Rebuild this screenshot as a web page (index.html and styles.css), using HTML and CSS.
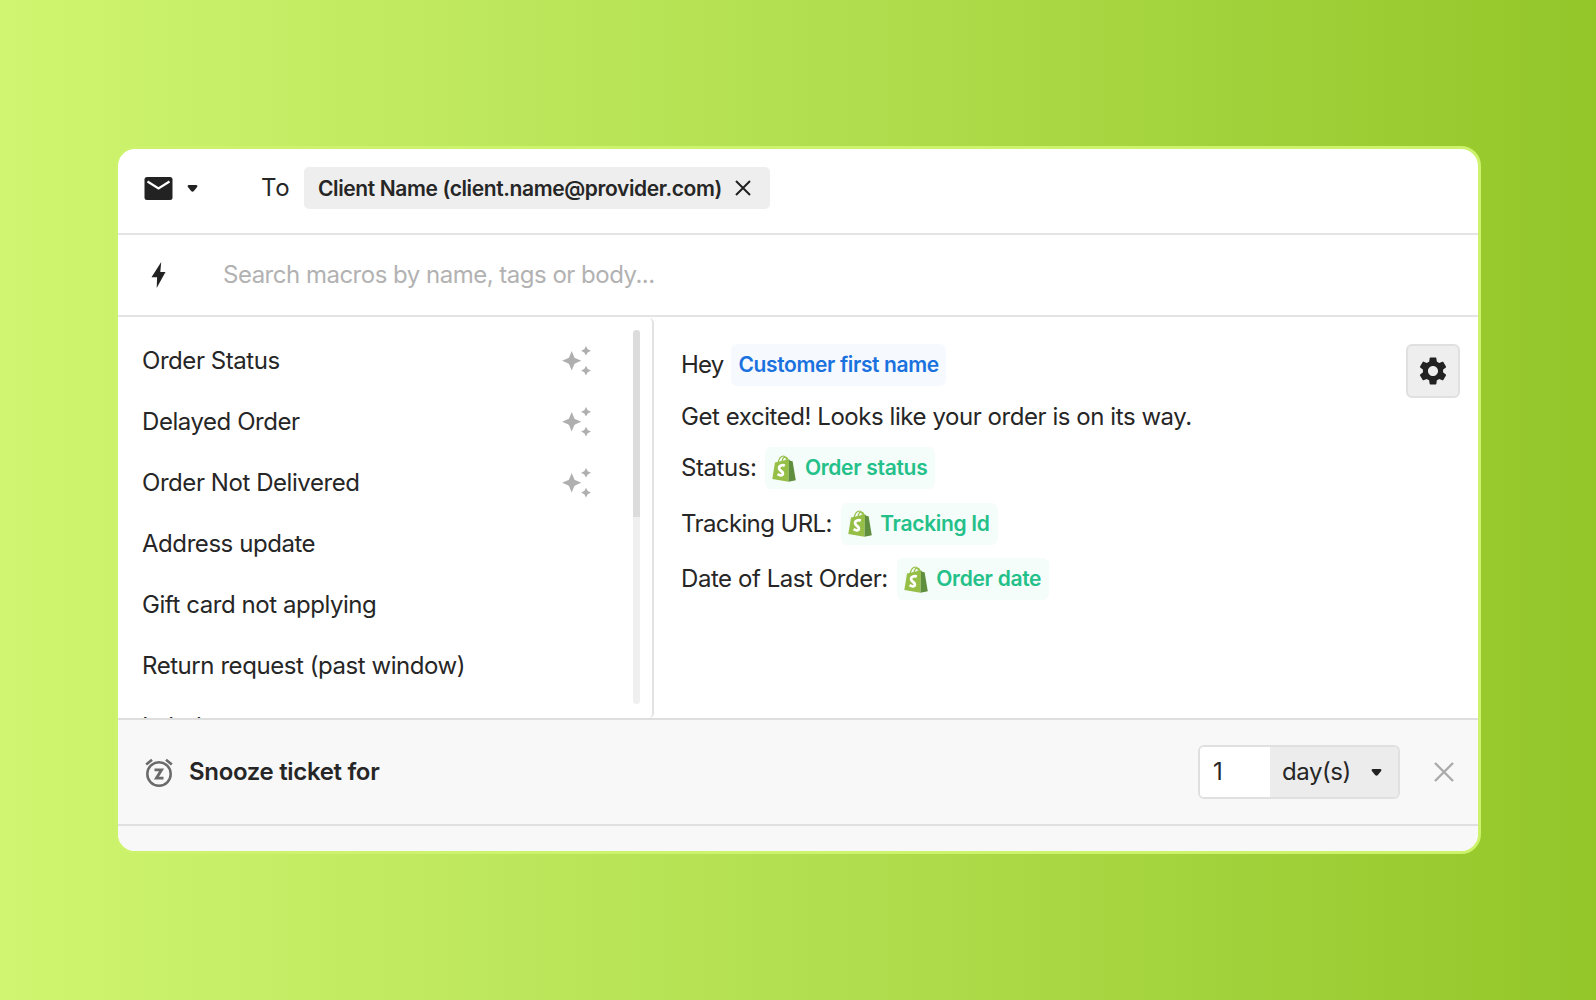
FILE: index.html
```html
<!DOCTYPE html>
<html lang="en">

<head>
    <meta charset="UTF-8">
    <meta name="viewport" content="width=device-width, initial-scale=1.0">
    <title>Macros</title>
    <link rel="stylesheet" href="styles.css">
</head>

<body>
    <!-- shared icons -->
    <svg class="defs" width="0" height="0">
        <symbol id="sparkles" viewBox="0 0 30 30">
            <path d="M9.7 5 L12.3 11.200 Q12.700 12 13.500 12.300 L19.300 14.700 L13.500 17.200 Q12.700 17.500 12.300 18.300 L9.700 24.500 L7.100 18.300 Q6.700 17.500 5.900 17.200 L0.100 14.700 L5.900 12.300 Q6.700 12 7.100 11.200Z" />
            <path d="M24 0 L25.700 3.300 L29 4.800 L25.700 6.400 L24 9.600 L22.300 6.400 L19.100 4.800 L22.300 3.300Z" />
            <path d="M24 19.800 L25.700 23.100 L29 24.600 L25.700 26.200 L24 29.400 L22.300 26.200 L19.100 24.600 L22.300 23.100Z" />
        </symbol>
        <symbol id="caret" viewBox="0 0 10 7">
            <path d="M1 0 H9 Q10.4 0.6 9.6 2 L6.4 6 Q5 7.4 3.6 6 L0.4 2 Q-0.4 0.6 1 0Z" />
        </symbol>
        <symbol id="bag" viewBox="0 0 24 27">
            <path d="M6 8 C7 3 9.500 1 11.500 1 C14 1 14.500 4 14.500 7 M10 7 C10.500 3.500 12 2 13.500 2.200 C15.500 2.500 16 4 16 6.500" fill="none" stroke="#95bf47" stroke-width="1.200" />
            <path d="M3 7.500 L17 4.300 L16.500 26.800 L0.300 24Z" fill="#95bf47" />
            <path d="M17 4.300 L18.200 5.800 L20.600 6.200 L23.800 25.200 L16.500 26.800Z" fill="#5e8e3e" />
            <path d="M12.800 10.700 C10.500 9.600 7 10.500 7.100 13.300 C7.200 16 11 16 10.900 18.500 C10.700 21.200 7.500 20.500 5.600 19.200" fill="none" stroke="#fff" stroke-width="2.800" />
        </symbol>
    </svg>

    <div class="card">
        <div class="recipient">
            <svg class="icon-mail" viewBox="0 0 28 23">
                <rect width="28" height="23" rx="2.500" fill="#222" />
                <path d="M3 4.500 L14 11.500 L25 4.500" fill="none" stroke="#fff" stroke-width="2.200" />
            </svg>
            <svg class="caret caret-mail"><use href="#caret" /></svg>
            <span class="to">To</span>
            <span class="chip">
                <span class="chip-text">Client Name (client.name@provider.com)</span>
                <svg class="chip-close" viewBox="0 0 16 16">
                    <path d="M1 1 L15 15 M15 1 L1 15" />
                </svg>
            </span>
        </div>

        <div class="search">
            <svg class="icon-bolt" viewBox="0 0 14 26">
                <path d="M9.700 0 L8.800 10 H14 L5.200 26 L5.600 15.200 H0Z" fill="#222" />
            </svg>
            <span class="placeholder">Search macros by name, tags or body...</span>
        </div>

        <div class="content">
            <div class="list">
                <div class="item"><span>Order Status</span><svg class="sparkles"><use href="#sparkles" /></svg></div>
                <div class="item"><span>Delayed Order</span><svg class="sparkles"><use href="#sparkles" /></svg></div>
                <div class="item"><span>Order Not Delivered</span><svg class="sparkles"><use href="#sparkles" /></svg></div>
                <div class="item"><span>Address update</span></div>
                <div class="item"><span>Gift card not applying</span></div>
                <div class="item"><span>Return request (past window)</span></div>
                <div class="item"><span>Label</span></div>
                <div class="scrollbar"><div class="thumb"></div></div>
            </div>

            <div class="preview">
                <div class="message">
                    <div class="line first"><span class="text">Hey</span><span class="tag blue"><b>Customer first name</b></span></div>
                    <div class="line plain"><span class="text">Get excited! Looks like your order is on its way.</span></div>
                    <div class="line"><span class="text">Status:</span><span class="tag green"><svg class="bag"><use href="#bag" /></svg><b>Order status</b></span></div>
                    <div class="line tracking"><span class="text">Tracking URL:</span><span class="tag green"><svg class="bag"><use href="#bag" /></svg><b>Tracking Id</b></span></div>
                    <div class="line"><span class="text">Date of Last Order:</span><span class="tag green"><svg class="bag"><use href="#bag" /></svg><b>Order date</b></span></div>
                </div>
                <button class="settings">
                    <svg class="icon-gear" viewBox="2.270 2 19.460 20">
                        <path fill="#222" d="M19.140 12.940c.04-.3.060-.61.060-.94 0-.32-.02-.64-.07-.94l2.030-1.580c.18-.14.230-.41.120-.61l-1.920-3.320c-.12-.22-.37-.29-.59-.22l-2.390.96c-.5-.38-1.030-.7-1.620-.94l-.36-2.540c-.04-.24-.24-.41-.48-.41h-3.840c-.24 0-.43.17-.47.41l-.36 2.540c-.59.24-1.130.57-1.620.94l-2.390-.96c-.22-.08-.47 0-.59.22L2.740 8.870c-.12.21-.08.47.12.61l2.030 1.580c-.05.3-.09.63-.09.94s.02.64.07.94l-2.030 1.580c-.18.14-.23.41-.12.61l1.920 3.320c.12.22.37.29.59.22l2.390-.96c.5.38 1.030.7 1.620.94l.36 2.540c.05.24.24.41.48.41h3.840c.24 0 .44-.17.47-.41l.36-2.540c.59-.24 1.130-.56 1.620-.94l2.390.96c.22.08.47 0 .59-.22l1.920-3.320c.12-.22.070-.47-.12-.61l-2.010-1.580zM12 15.600c-1.980 0-3.600-1.620-3.600-3.600s1.620-3.600 3.600-3.600 3.600 1.620 3.600 3.600-1.620 3.600-3.600 3.600z" />
                    </svg>
                </button>
            </div>
        </div>

        <div class="snooze">
            <svg class="icon-snooze" viewBox="0 0 28 29" fill="none" stroke="#6a6a6a">
                <circle cx="14" cy="16" r="11.700" stroke-width="2.500" />
                <path d="M1.200 6.500 L7 1.700 M26.800 6.500 L21 1.700" stroke-width="2.600" />
                <path d="M9.500 11.800 H16.600 L11.400 20.200 H18.500" stroke-width="2.800" />
            </svg>
            <span class="snooze-text">Snooze ticket for</span>
            <div class="duration">
                <span class="amount">1</span>
                <span class="unit"><span>day(s)</span><svg class="caret"><use href="#caret" /></svg></span>
            </div>
            <svg class="snooze-close" viewBox="0 0 20 20">
                <path d="M1 1 L19 19 M19 1 L1 19" />
            </svg>
        </div>
        <div class="bottom"></div>
    </div>
</body>

</html>
```

FILE: styles.css
```css
* {
    box-sizing: border-box;
}

body {
    margin: 0;
    width: 1596px;
    height: 1000px;
    overflow: hidden;
    display: flex;
    justify-content: center;
    align-items: center;
    background: linear-gradient(90deg, #d0f570 0%, #b2df50 50%, #98ca2e 93%, #92c629 100%);
    font-family: Inter, "Liberation Sans", sans-serif;
    font-size: 24px;
    letter-spacing: -0.44px;
    color: #262626;
}

svg {
    flex: none;
    display: block;
}

.defs {
    position: absolute;
}

.card {
    width: 1366px;
    height: 708px;
    border: 3px solid #cdf26c;
    border-radius: 20px;
    background: #fff;
    overflow: hidden;
    display: flex;
    flex-direction: column;
}

/* recipient row */
.recipient {
    height: 86px;
    flex: none;
    display: flex;
    align-items: center;
    padding: 0 0 6px 26px;
    border-bottom: 2px solid #e4e4e4;
}

.icon-mail {
    width: 29px;
    height: 23px;
}

.caret {
    width: 11px;
    height: 7px;
    fill: #222;
}

.caret-mail {
    margin-left: 14px;
}

.to {
    margin-left: 63px;
    width: 43px;
    padding-bottom: 1px;
    letter-spacing: 0.7px;
}

.chip {
    height: 42px;
    width: 466px;
    border-radius: 5px;
    background: #eee;
    display: flex;
    align-items: center;
    justify-content: space-between;
    padding: 0 19px 0 14px;
}

.chip-text {
    font-size: 21px;
    font-weight: 600;
    letter-spacing: -0.39px;
    white-space: nowrap;
}

.chip-close {
    width: 16px;
    height: 16px;
    stroke: #222;
    stroke-width: 2;
}

/* search row */
.search {
    height: 82px;
    flex: none;
    display: flex;
    align-items: center;
    padding-left: 33px;
    border-bottom: 2px solid #e4e4e4;
}

.icon-bolt {
    width: 15px;
    height: 26px;
}

.placeholder {
    margin-left: 57px;
    padding-bottom: 2px;
    letter-spacing: -0.5px;
    color: #b2b2b2;
}

/* macros list and preview */
.content {
    height: 401px;
    flex: none;
    display: flex;
}

.list {
    position: relative;
    width: 536px;
    height: 400px;
    margin-top: 1px;
    padding-top: 12px;
    border-right: 2px solid #e2e2e2;
    border-radius: 0 5px 5px 0;
    overflow: hidden;
}

.item {
    height: 61px;
    display: flex;
    align-items: center;
    justify-content: space-between;
    padding: 0 60px 0 24px;
}

.sparkles {
    width: 30px;
    height: 30px;
    fill: #afafaf;
}

.scrollbar {
    position: absolute;
    top: 12px;
    right: 12px;
    width: 7px;
    height: 374px;
    border-radius: 4px;
    background: #efefef;
}

.thumb {
    height: 187px;
    border-radius: 4px 4px 0 0;
    background: #dcdcdc;
}

.preview {
    flex: 1;
    display: flex;
    justify-content: space-between;
    align-items: flex-start;
    padding: 27px 18px 0 27px;
}

.line {
    height: 42px;
    margin-bottom: 13.5px;
    display: flex;
    align-items: center;
    gap: 9px;
    white-space: nowrap;
}

.line.first {
    gap: 8px;
}

.line.first .text {
    letter-spacing: -0.8px;
}

.line.plain {
    height: 34px;
}

.line.tracking .text {
    letter-spacing: -0.62px;
}

.text,
.tag b {
    padding-bottom: 1px;
}

.tag {
    height: 42px;
    display: flex;
    align-items: center;
    padding: 0 8px 0 7px;
    border-radius: 6px;
}

.tag b {
    font-size: 21px;
    font-weight: 600;
    letter-spacing: -0.3px;
}

.blue {
    padding-right: 7px;
    background: #f6f9fe;
    color: #1a72de;
}

.blue b {
    letter-spacing: -0.37px;
}

.green {
    background: #f5fdfa;
    color: #24c089;
}

.bag {
    width: 24px;
    height: 27px;
    margin-right: 8.5px;
}

.settings {
    width: 54px;
    height: 54px;
    padding: 0;
    border: 2px solid #e0e0e0;
    border-radius: 6px;
    background: #eee;
    display: flex;
    align-items: center;
    justify-content: center;
}

.icon-gear {
    width: 28px;
    height: 28px;
}

/* snooze bar */
.snooze {
    height: 108px;
    flex: none;
    display: flex;
    align-items: center;
    padding: 0 24px 0 27px;
    border-top: 2px solid #dedede;
    border-bottom: 2px solid #e0e0e0;
    background: #f8f8f8;
}

.icon-snooze {
    width: 28px;
    height: 29px;
}

.snooze-text {
    margin-left: 16px;
    padding-bottom: 2px;
    font-weight: 600;
    letter-spacing: -0.33px;
}

.duration {
    width: 202px;
    height: 54px;
    margin-left: auto;
    border: 2px solid #e0e0e0;
    border-radius: 6px;
    overflow: hidden;
    display: flex;
}

.amount {
    width: 70px;
    padding-left: 13px;
    background: #fff;
    line-height: 50px;
}

.unit {
    flex: 1;
    display: flex;
    align-items: center;
    justify-content: space-between;
    padding: 0 16px 0 12px;
    background: #ececec;
}

.unit span {
    padding-bottom: 1px;
}

.snooze-close {
    width: 20px;
    height: 20px;
    margin-left: 34px;
    stroke: #aaa;
    stroke-width: 2.4;
}

.bottom {
    flex: 1;
    background: #f8f8f8;
}
```
